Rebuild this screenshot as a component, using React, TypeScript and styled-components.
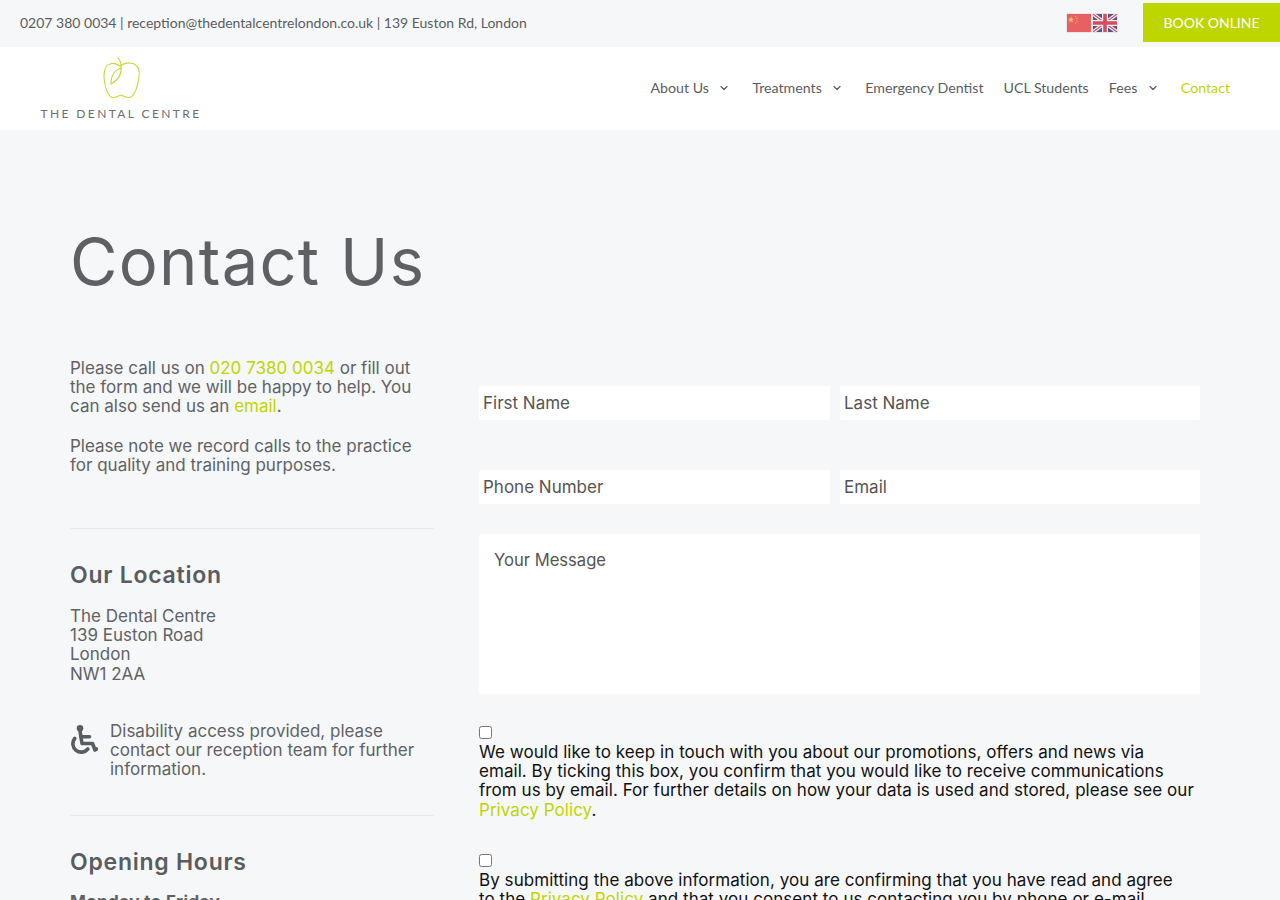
import React from 'react';
import styled, {createGlobalStyle} from "styled-components";
import {ChevronDown} from "lucide-react";

const GlobalStyle = createGlobalStyle`
  html, body {
    margin: 0;
    padding: 0;
    background: #f6f7f9;
    overflow-x: hidden;
  }

  * {
    box-sizing: border-box;
  }
`

const CSSTopBar = styled.div`
  height: 47px;
  padding: 3px 0 5px 20px;
  background: #f6f7f9;
  display: flex;
  align-items: center;
  justify-content: space-between;
  font-family: Lato, "Liberation Sans", sans-serif;
  font-size: 14px;
  color: #5a5d60;
`

const CSSTopRight = styled.div`
  display: flex;
  align-items: center;
  height: 100%;
`

const CSSFlags = styled.div`
  display: flex;
  gap: 2px;
  margin-right: 26px;

  svg {
    display: block;
    opacity: 0.85;
    box-shadow: 0 0 1px rgba(0, 0, 0, 0.45);
  }
`

const CSSBook = styled.a`
  width: 137px;
  height: 39px;
  background: #bed600;
  color: #fff;
  font-size: 14px;
  display: flex;
  align-items: center;
  justify-content: center;
`

const CSSNav = styled.div`
  height: 83px;
  padding: 0 50px 0 40px;
  background: #fff;
  display: flex;
  align-items: center;
  justify-content: space-between;
  font-family: Lato, "Liberation Sans", sans-serif;
`

const CSSLogo = styled.div`
  width: 160px;
  display: flex;
  flex-direction: column;
  align-items: center;
  gap: 7px;
  margin-top: 0;

  svg {
    display: block;
    margin-left: 3px;
  }
`

const CSSLogoText = styled.div`
  margin-left: 2px;
  font-size: 12px;
  line-height: 14px;
  letter-spacing: 2.4px;
  white-space: nowrap;
  color: #6d6e70;
`

const CSSMenu = styled.nav`
  display: flex;
  gap: 20px;
  align-items: center;
  margin-top: -3px;
`

const CSSMenuItem = styled.a<{ $active?: boolean }>`
  display: flex;
  align-items: center;
  gap: 11.5px;
  font-size: 14.2px;
  color: ${props => props.$active ? '#bed600' : '#5a5d60'};

  svg {
    margin-top: 1px;
    margin-left: -2px;
    margin-right: 2px;
  }
`

const CSSMain = styled.main`
  padding: 92px 80px 40px 70px;
  font-family: Inter, "Open Sans", sans-serif;
  color: #606265;
`

const CSSTitle = styled.h1`
  margin: 0 0 57px;
  font-size: 65px;
  line-height: 80px;
  font-weight: 400;
  letter-spacing: 1.3px;
  color: #5e6063;
`

const CSSColumns = styled.div`
  display: grid;
  grid-template-columns: 364px 721px;
  column-gap: 45px;
  align-items: start;
`

const CSSIntro = styled.div`
  padding-bottom: 33px;
`

const CSSText = styled.p`
  margin: 0 0 20px;
  font-size: 17px;
  line-height: 19.2px;

  a {
    color: #bed600;
  }
`

const CSSDivider = styled.hr`
  margin: 0;
  border: 0;
  border-top: 1px solid #e8e9eb;
`

const CSSSection = styled.section`
  padding-top: 30px;
`

const CSSHeading = styled.h2`
  margin: 0 0 16px;
  font-size: 23px;
  line-height: 32px;
  font-weight: 600;
  letter-spacing: 0.75px;
  color: #5a5d60;
`

const CSSAccess = styled.div`
  display: flex;
  align-items: flex-start;
  gap: 12px;
  margin: 38px 0 36px;

  svg {
    flex: none;
    margin-top: 3px;
  }

  p {
    margin: 0;
  }
`

const CSSDays = styled.div`
  margin-top: -1px;
  font-size: 17px;
  font-weight: 700;
  line-height: 19px;
  letter-spacing: 0.4px;
`

const CSSForm = styled.form`
  padding-top: 27px;
`

const CSSRow = styled.div`
  display: grid;
  grid-template-columns: 351px 360px;
  column-gap: 10px;
  margin-bottom: 50px;

  & + & {
    margin-bottom: 30px;
  }
`

const CSSInput = styled.input`
  height: 34px;
  padding: 0 4px;
  border: 0;
  border-radius: 2px;
  background: #fff;
  font-family: inherit;
  font-size: 17px;
  color: #555;

  &::placeholder {
    color: #555;
    opacity: 1;
  }
`

const CSSMessage = styled.textarea`
  display: block;
  width: 100%;
  height: 160px;
  padding: 17px 15px;
  border: 0;
  border-radius: 2px;
  background: #fff;
  resize: none;
  font-family: inherit;
  font-size: 16.6px;
  line-height: 19px;

  &::placeholder {
    color: #555;
    opacity: 1;
  }
`

const CSSConsent = styled.label`
  display: block;
  margin-top: 32px;
  font-size: 17px;
  line-height: 19.2px;
  letter-spacing: 0.05px;
  color: #111;

  input {
    display: block;
    width: 13px;
    height: 13px;
    margin: 0 0 4px;
  }

  a {
    color: #bed600;
  }

  & + & {
    margin-top: 34px;
  }
`

const UKFlag = () => (
    <svg width="24" height="18" viewBox="0 0 24 18">
        <rect width="24" height="18" fill="#3c3b6e"/>
        <path d="M0 0L24 18M24 0L0 18" stroke="#f1eef2" strokeWidth="3.6"/>
        <path d="M0 0L24 18M24 0L0 18" stroke="#cf3044" strokeWidth="1.2"/>
        <path d="M12 0V18M0 9H24" stroke="#f1eef2" strokeWidth="6"/>
        <path d="M12 0V18M0 9H24" stroke="#cf3044" strokeWidth="3.6"/>
    </svg>
);

const CNFlag = () => (
    <svg width="24" height="18" viewBox="0 0 24 18">
        <rect width="24" height="18" fill="#e5484a"/>
        <path d="M4 2.500l.8 2.200 2.200.1-1.700 1.400.6 2.200L4 7.100 2.100 8.400l.6-2.200L1 4.800l2.200-.1z" fill="#f0c04a"/>
        <circle cx="8.500" cy="2.500" r=".6" fill="#f0c04a"/>
        <circle cx="10" cy="4.500" r=".6" fill="#f0c04a"/>
        <circle cx="10" cy="7" r=".6" fill="#f0c04a"/>
        <circle cx="8.500" cy="9" r=".6" fill="#f0c04a"/>
    </svg>
);

const AppleLogo = () => (
    <svg width="40" height="44" viewBox="0 0 40 44" fill="none" stroke="#c4db3c" strokeWidth="1.1">
        <path d="M18 10C22 7 28 6 32 8C36 10 38 15 37 21C36 28 34 38 29 41C25 43 22 40 19 39C16 40 13 43 9 41C5 38 2 28 2 20C2 14 4 9 8 8C12 6 15 8 18 10Z"/>
        <path d="M16 2C18 4 19 7 19 10C20 17 18 23 9 28C9 22 11 14 20 12"/>
    </svg>
);

const WheelchairIcon = () => (
    <svg width="28" height="29" viewBox="0 0 28 29" fill="none" stroke="#5a5d60" strokeWidth="3.6" strokeLinecap="round" strokeLinejoin="round">
        <circle cx="10" cy="3.300" r="3.300" fill="#5a5d60" stroke="none"/>
        <path d="M10 6L12 18.500H22.500L25 25L26.500 24"/>
        <path d="M11.500 11.700H19.500"/>
        <path d="M4.700 13.500A7.800 7.800 0 1 0 17.800 24"/>
    </svg>
);

const App = () => {
    return (
        <>
            <GlobalStyle/>
            <CSSTopBar>
                <div>0207 380 0034 | reception@thedentalcentrelondon.co.uk | 139 Euston Rd, London</div>
                <CSSTopRight>
                    <CSSFlags>
                        <CNFlag/>
                        <UKFlag/>
                    </CSSFlags>
                    <CSSBook>BOOK ONLINE</CSSBook>
                </CSSTopRight>
            </CSSTopBar>
            <CSSNav>
                <CSSLogo>
                    <AppleLogo/>
                    <CSSLogoText>THE DENTAL CENTRE</CSSLogoText>
                </CSSLogo>
                <CSSMenu>
                    <CSSMenuItem>About Us <ChevronDown size={12} strokeWidth={2.5}/></CSSMenuItem>
                    <CSSMenuItem>Treatments <ChevronDown size={12} strokeWidth={2.5}/></CSSMenuItem>
                    <CSSMenuItem>Emergency Dentist</CSSMenuItem>
                    <CSSMenuItem>UCL Students</CSSMenuItem>
                    <CSSMenuItem>Fees <ChevronDown size={12} strokeWidth={2.5}/></CSSMenuItem>
                    <CSSMenuItem $active>Contact</CSSMenuItem>
                </CSSMenu>
            </CSSNav>
            <CSSMain>
                <CSSTitle>Contact Us</CSSTitle>
                <CSSColumns>
                    <div>
                        <CSSIntro>
                            <CSSText>Please call us on <a>020 7380 0034</a> or fill out the form and we will be happy to help. You can also send us an <a>email</a>.</CSSText>
                            <CSSText>Please note we record calls to the practice for quality and training purposes.</CSSText>
                        </CSSIntro>
                        <CSSDivider/>
                        <CSSSection>
                            <CSSHeading>Our Location</CSSHeading>
                            <CSSText>The Dental Centre<br/>139 Euston Road<br/>London<br/>NW1 2AA</CSSText>
                            <CSSAccess>
                                <WheelchairIcon/>
                                <CSSText>Disability access provided, please contact our reception team for further information.</CSSText>
                            </CSSAccess>
                        </CSSSection>
                        <CSSDivider/>
                        <CSSSection>
                            <CSSHeading>Opening Hours</CSSHeading>
                            <CSSDays>Monday to Friday</CSSDays>
                        </CSSSection>
                    </div>
                    <CSSForm>
                        <CSSRow>
                            <CSSInput placeholder="First Name"/>
                            <CSSInput placeholder="Last Name"/>
                        </CSSRow>
                        <CSSRow>
                            <CSSInput placeholder="Phone Number"/>
                            <CSSInput placeholder="Email"/>
                        </CSSRow>
                        <CSSMessage placeholder="Your Message"/>
                        <CSSConsent>
                            <input type="checkbox"/>
                            We would like to keep in touch with you about our promotions, offers and news via<br/>
                            email. By ticking this box, you confirm that you would like to receive communications<br/>
                            from us by email. For further details on how your data is used and stored, please see our<br/>
                            <a>Privacy Policy</a>.
                        </CSSConsent>
                        <CSSConsent>
                            <input type="checkbox"/>
                            By submitting the above information, you are confirming that you have read and agree<br/>
                            to the <a>Privacy Policy</a> and that you consent to us contacting you by phone or e-mail.
                        </CSSConsent>
                    </CSSForm>
                </CSSColumns>
            </CSSMain>
        </>
    );
};

export default App;
